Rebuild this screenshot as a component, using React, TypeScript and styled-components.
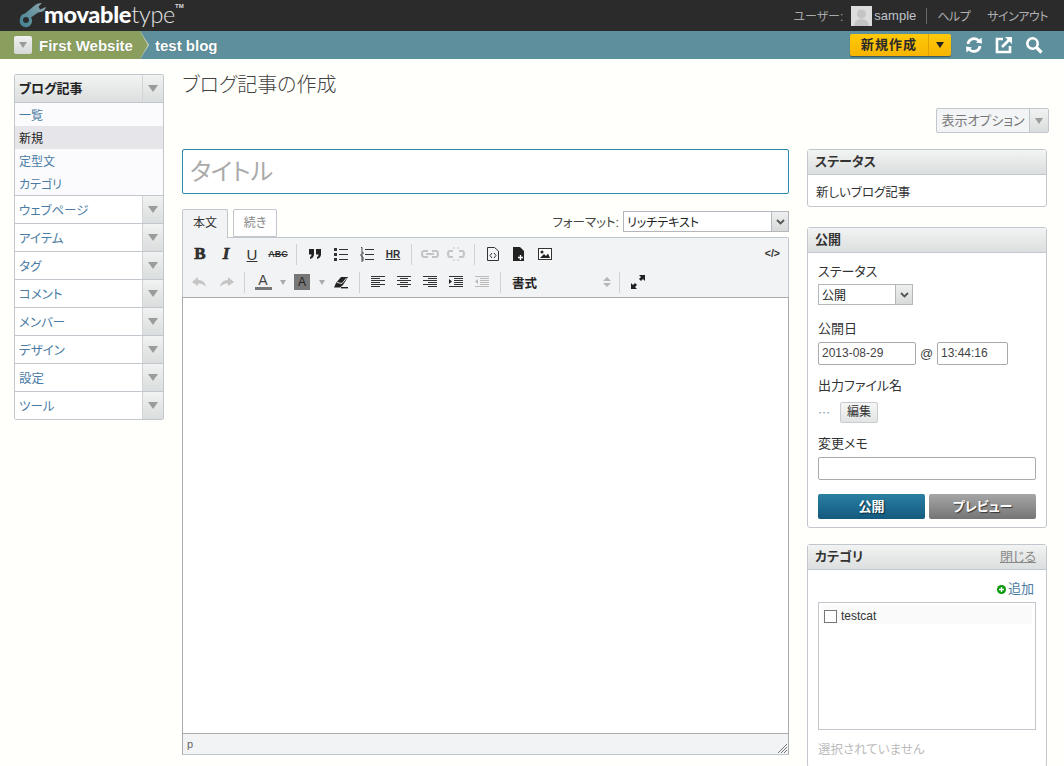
import React from "react";
import styled, { createGlobalStyle } from "styled-components";

const FONT = `"Liberation Sans", "Noto Sans CJK JP", sans-serif`;

const Global = createGlobalStyle`
  html, body { margin: 0; padding: 0; background: #fffffb; }
  body { font-family: ${FONT}; font-size: 13px; color: #333; font-feature-settings: "palt"; }
  * { box-sizing: border-box; }
`;

const Page = styled.div`width: 1064px; height: 766px; overflow: hidden; background: #fffffb;`;

/* header */
const TopBar = styled.header`
  height: 31px; background: #2b2b2b; display: flex; align-items: center; justify-content: space-between;
  padding: 0 16px 0 18px;
`;
const Logo = styled.div`display: flex; align-items: flex-start; height: 31px;`;
const LogoText = styled.div`
  font-family: Lato, "Open Sans", sans-serif; font-size: 23.5px; line-height: 29px; color: #fff; margin-left: -5px; letter-spacing: -0.3px;
  b { font-weight: 900; }
  span { font-weight: 300; color: #e4e4e4; }
`;
const Tm = styled.sup`font-size: 6px; line-height: 10px; font-weight: 700; color: #ddd; margin-top: 1px; margin-left: 0;`;
const UserNav = styled.nav`display: flex; align-items: center; font-size: 12px; color: #a9a9a9;`;
const Avatar = styled.div`width: 21px; height: 20px; background: #dcdcdc; margin: 0 2px 0 8px; display: flex; overflow: hidden;`;
const UserName = styled.span`color: #bfc4cc; font-size: 13px; padding-right: 10px; border-right: 1px solid #6a6a6a; line-height: 16px; margin-right: 10px;`;
const TopLink = styled.span`color: #b0b0b0; letter-spacing: -0.5px; margin-right: ${p => p.$gap ?? 0}px;`;

const NavBar = styled.div`height: 28px; background: #5d8f9c; display: flex; align-items: center; justify-content: space-between; padding-right: 21px;`;
const Crumbs = styled.div`display: flex; align-items: center; height: 100%;`;
const SiteCrumb = styled.div`
  position: relative; height: 28px; width: 140px; background: #8a9f5e; display: flex; align-items: center; padding-left: 14px; gap: 7px;
  &::after { content: ""; position: absolute; right: -8px; top: 0; width: 8px; height: 28px; background: #8a9f5e;
    clip-path: polygon(0 0, 100% 50%, 0 100%); }
  &::before { content: ""; position: absolute; right: -9px; top: 0; width: 9px; height: 28px; background: #dfe8e0;
    clip-path: polygon(0 0, 100% 50%, 0 100%); z-index: 0; }
`;
const CrumbMenu = styled.div`width: 18px; height: 18px; border-radius: 2px; background: linear-gradient(#f0f0f0, #d6d8d8); display: flex; align-items: center; justify-content: center;`;
const CrumbText = styled.b`color: #fff; font-size: 15px; font-weight: 700; text-shadow: 0 0 1px rgba(0,0,0,.3); margin-left: ${p => p.$left ?? 0}px; position: relative; z-index: 2;`;
const NavTools = styled.div`display: flex; align-items: center;`;
const CreateBtn = styled.div`
  width: 101px; height: 22px; display: flex; border-radius: 2px; background: linear-gradient(#ffca0a, #f7b400); box-shadow: 0 1px 1px rgba(0,0,0,.4);
  margin-right: 14px; font-weight: 700; font-size: 13px; color: #2a2a2a; align-items: center;
`;
const CreateLabel = styled.span`width: 79px; text-align: center; letter-spacing: 1.1px; line-height: 22px; border-right: 1px solid #e3a200; font-feature-settings: normal;`;
const CreateArrow = styled.span`flex: 1; display: flex; justify-content: center;`;
const ToolIcon = styled.svg`width: 18px; height: 18px; margin-left: ${p => p.$left ?? 12}px; display: block;`;

/* body */
const Body = styled.div`display: flex; align-items: flex-start; padding: 15px 0 0 14px;`;
const SideNav = styled.aside`width: 150px; margin-right: 18px; border: 1px solid #c2c7ce; border-radius: 2px; background: #fff;`;
const SideRow = styled.div`
  height: ${p => p.$first ? 27 : 28}px; display: flex; align-items: stretch; border-top: ${p => p.$first ? 0 : "1px solid #c2c7ce"};
  background: ${p => p.$active ? "linear-gradient(#f3f3f3,#dcdfdf)" : "#fff"};
`;
const SideLabel = styled.div`
  flex: 1; padding: 0 0 ${p => p.$active ? 2 : 1}px 4px; display: flex; align-items: center; font-size: ${p => p.$active ? 13 : 12.5}px;
  color: ${p => p.$active ? "#222" : "#4a7ba3"}; font-weight: ${p => p.$active ? 700 : 400};
`;
const SideToggle = styled.div`
  width: 21px; border-left: 1px solid #d0d4d8; background: linear-gradient(#f1f2f2, #dadddd); display: flex; align-items: center; justify-content: center;
`;
const Down = styled.span`
  width: 0; height: 0; display: block; border-left: ${p => p.$s ?? 5}px solid transparent; border-right: ${p => p.$s ?? 5}px solid transparent;
  border-top: ${p => (p.$s ?? 5) + 2}px solid ${p => p.$c ?? "#9b9b9b"};
`;
const SubList = styled.div`border-top: 1px solid #c2c7ce; background: #fbfbfd; padding: 0; height: 93px;`;
const SubItem = styled.div`
  height: 23px; padding-left: 4px; display: flex; align-items: center; font-size: 12px;
  color: ${p => p.$on ? "#222" : "#4a7ba3"}; background: ${p => p.$on ? "#e6e6ea" : "transparent"};
`;

const Content = styled.main`width: 867px;`;
const PageTitle = styled.h1`margin: 0; font-weight: 300; font-size: 20px; line-height: 23px; color: #444; height: 19px;`;
const OptionRow = styled.div`display: flex; justify-content: flex-end; margin-top: 15px;`;
const OptionBtn = styled.div`
  width: 113px; height: 25px; border: 1px solid #c2c7ce; border-radius: 2px; background: #f3f4f6; display: flex; font-size: 13px; color: #777;
`;
const OptionLabel = styled.span`flex: 1; text-align: center; line-height: 23px; border-right: 1px solid #c2c7ce;`;
const OptionArrow = styled.span`width: 18px; display: flex; align-items: center; justify-content: center; background: linear-gradient(#f1f2f2,#dadddd);`;

const Columns = styled.div`display: flex; align-items: flex-start; gap: 18px; margin-top: 16px;`;
const Editor = styled.section`width: 607px;`;
const TitleInput = styled.div`
  height: 45px; border: 1px solid #2b8aa8; border-radius: 2px; background: #fff; font-size: 24px; color: #aaa; line-height: 43px; padding-left: 7px;
`;
const TabBar = styled.div`display: flex; align-items: flex-end; height: 29px; margin-top: 14px; position: relative;`;
const Tab = styled.div`
  width: ${p => p.$w}px; height: ${p => p.$on ? 29 : 28}px; margin-right: 5px; border: 1px solid #c2c7ce; border-bottom: ${p => p.$on ? 0 : "1px solid #c2c7ce"};
  border-radius: 2px 2px 0 0; background: ${p => p.$on ? "#f2f3f4" : "#fff"}; color: ${p => p.$on ? "#333" : "#888"};
  font-size: 12px; text-align: center; line-height: 27px; margin-bottom: ${p => p.$on ? -1 : 0}px; z-index: 1;
`;
const FormatBox = styled.div`margin-left: auto; align-self: flex-start; margin-top: 3px; display: flex; align-items: center; font-size: 12.5px; color: #444;`;
const FakeSelect = styled.div`
  width: ${p => p.$w}px; height: ${p => p.$h ?? 21}px; margin-left: ${p => p.$left ?? 0}px; margin-top: ${p => p.$top ?? 0}px; border: 1px solid #b4b8bc; background: #fff; display: flex; align-items: center; font-size: 12px; color: #222; padding-left: 3px;
`;
const SelectValue = styled.span`flex: 1;`;
const SelectBtn = styled.span`
  width: 17px; height: 100%; background: linear-gradient(#eef0f0,#d8dada); border-left: 1px solid #b4b8bc; display: flex; align-items: center; justify-content: center;
`;
const Toolbar = styled.div`border: 1px solid #c2c7ce; border-bottom: 0; background: #f2f3f4; height: 60px; padding: 2px 0 0 4px; position: relative; border-radius: 0 2px 0 0;`;
const ToolRow = styled.div`display: flex; align-items: center; height: 28px;`;
const TBtn = styled.div`
  width: ${p => p.$w ?? 26}px; height: 26px; display: flex; align-items: center; justify-content: center; flex: none; color: #333;
  svg { display: block; }
`;
const TSep = styled.div`width: 1px; height: 21px; background: #cfd2d4; margin: 0 5px; flex: none;`;
const TxtIcon = styled.span`
  font-family: ${p => p.$serif ? `"Liberation Serif", serif` : `"Liberation Sans", sans-serif`}; font-weight: ${p => p.$thin ? 400 : 700}; color: #333;
  font-size: ${p => p.$size ?? 15}px; font-style: ${p => p.$it ? "italic" : "normal"}; text-decoration: ${p => p.$dec ?? "none"};
  -webkit-text-stroke: ${p => p.$heavy ? "0.6px #222" : "0"};
`;
const SourceBtn = styled.span`position: absolute; right: 8px; top: 9px; font-size: 10.5px; font-weight: 700; color: #333; font-family: "Liberation Sans", sans-serif;`;
const ColorA = styled.span`
  font-size: 14px; line-height: 13px; color: #444; display: flex; flex-direction: column; align-items: center; width: 17px;
  border-bottom: 3px solid #777;
`;
const BgA = styled.span`width: 16px; height: 16px; background: #777; color: #222; font-size: 12px; line-height: 16px; text-align: center;`;
const StyleSelect = styled.div`width: 108px; flex: none; display: flex; align-items: center; justify-content: space-between; padding: 0 3px 0 6px; font-size: 12.5px; font-weight: 700; color: #222;`;
const UpDown = styled.span`display: flex; flex-direction: column; gap: 2px;
  &::before, &::after { content: ""; width: 0; height: 0; border-left: 4px solid transparent; border-right: 4px solid transparent; }
  &::before { border-bottom: 4px solid #b5b5b5; }
  &::after { border-top: 4px solid #b5b5b5; }
`;
const EditArea = styled.div`height: 436px; background: #fff; border: 1px solid #a9acae; border-bottom: 0;`;
const StatusBar = styled.div`height: 22px; background: #f2f3f4; border: 1px solid #a9acae; border-top: 1px solid #a9acae; border-bottom-color: #c2c7ce; font-size: 11px; color: #666; padding: 4px 4px; position: relative;`;
const Grip = styled.svg`position: absolute; right: 0; bottom: 0; width: 11px; height: 11px;`;

const Side = styled.section`width: 240px; display: flex; flex-direction: column;`;
const Panel = styled.div`
  border: 1px solid #c2c7ce; border-radius: 3px; background: #fff; margin-bottom: ${p => p.$mb ?? 0}px;
`;
const PanelHead = styled.div`
  height: 25px; background: linear-gradient(#f2f3f3,#dcdfdf); border-bottom: 1px solid #c2c7ce; display: flex; align-items: center; justify-content: space-between;
  padding: 0 10px 4px 7px; font-size: 13px; font-weight: 700; color: #333;
`;
const CloseLink = styled.span`font-weight: 400; color: #888; text-decoration: underline; font-size: 13px;`;
const PanelBody = styled.div`padding: ${p => p.$pad ?? "9px 10px 11px"}; font-size: 12px; color: #333;`;
const FieldLabel = styled.div`font-size: 13px; line-height: 18px; color: #333; margin-top: ${p => p.$top ?? 0}px;`;
const StatusText = styled.div`font-size: 12.5px; line-height: 20px; color: #333;`;
const DateRow = styled.div`display: flex; align-items: center; margin-top: 4px;`;
const TextBox = styled.div`
  width: ${p => p.$w}px; height: 23px; border: 1px solid #aaa; border-radius: 2px; background: #fff; font-size: 12px; line-height: 21px; padding-left: 3px; color: #444;
`;
const At = styled.span`width: 21px; text-align: center; font-size: 13px; color: #444;`;
const BasenameRow = styled.div`display: flex; align-items: center; margin-top: 7px; color: #7a9ab0; font-size: 12px;`;
const Dots = styled.span`font-family: "Noto Sans CJK JP", sans-serif; font-feature-settings: normal; width: 12px;`;
const MiniBtn = styled.div`
  width: 38px; height: 21px; margin-left: 10px; border: 1px solid #c8ccd0; border-radius: 2px; background: linear-gradient(#f6f6f6,#e2e4e4); font-size: 12px; color: #333; text-align: center; line-height: 19px;
`;
const WideInput = styled.div`height: 23px; border: 1px solid #aaa; border-radius: 2px; margin-top: 4px; background: #fff;`;
const Actions = styled.div`display: flex; gap: 4px; margin-top: 14px;`;
const Action = styled.div`
  flex: 1; height: 25px; border-radius: 2px; color: #fff; font-weight: 700; font-size: 13px; text-align: center; line-height: 25px; text-shadow: 1px 1px 1px rgba(0,0,0,.6);
  background: ${p => p.$primary ? "linear-gradient(#2a7fa3,#135a7e)" : "linear-gradient(#a6a6a6,#757575)"};
`;
const AddRow = styled.div`display: flex; justify-content: flex-end; align-items: center; gap: 1px; padding-right: 2px; font-size: 13px; color: #4a7ba3; line-height: 18px;`;
const CatBox = styled.div`height: 128px; margin-top: 4px; border: 1px solid #c2c7ce; background: #fff; padding: 2px 3px;`;
const CatItem = styled.div`height: 19px; background: #fafafa; display: flex; align-items: center; gap: 4px; padding: 3px 0 0 2px; font-size: 12px; color: #333;`;
const Check = styled.span`width: 13px; height: 13px; border: 1px solid #777; background: #fff; display: block;`;
const NoneText = styled.div`font-size: 12.5px; color: #bbb; margin-top: 11px; line-height: 18px;`;

const Wrench = () => (
  <svg width="30" height="26" viewBox="0 0 30 26" style={{ marginTop: 2, marginLeft: 1, display: "block" }}>
    <defs>
      <linearGradient id="wr" x1="0" y1="1" x2="1" y2="0">
        <stop offset="0" stopColor="#3f8090" />
        <stop offset="1" stopColor="#8fa9b0" />
      </linearGradient>
    </defs>
    <path d="M1 17 A6 6 0 0 1 6 11.5 L15 4 Q18 1 23 1 L19.5 4.5 L21 7.5 L27 5 Q26 10 19 10.5 L12 15.5 A6.2 6.2 0 1 1 1 17 Z M4 18 A3 3 0 1 0 10 18 A3 3 0 1 0 4 18 Z" fill="url(#wr)" fillRule="evenodd" />
  </svg>
);
const Person = () => (
  <svg width="21" height="20" viewBox="0 0 21 20"><circle cx="10.5" cy="8" r="4.5" fill="#c4c4c4" /><path d="M3 20 Q4 13 10.5 13 Q17 13 18 20Z" fill="#c4c4c4" /></svg>
);
const I = ({ children, w = 16, h = 16 }: { children: React.ReactNode; w?: number; h?: number }) => (
  <svg width={w} height={h} viewBox={`0 0 ${w} ${h}`}>{children}</svg>
);
const Lines = ({ c = "#333", rows }: { c?: string; rows: [number, number][] }) => (
  <I>{rows.map(([x, x2], i) => <rect key={i} x={x} y={2 + i * 2} width={x2 - x} height="1" fill={c} />)}</I>
);
const SelChev = () => (
  <svg width="9" height="6" viewBox="0 0 9 6"><path d="M1 1 L4.5 4.5 L8 1" stroke="#555" strokeWidth="1.8" fill="none" /></svg>
);

export default function App() {
  const menu = ["ウェブページ", "アイテム", "タグ", "コメント", "メンバー", "デザイン", "設定", "ツール"];
  return (
    <Page>
      <Global />
      <TopBar>
        <Logo>
          <Wrench />
          <LogoText><b>movable</b><span>type</span></LogoText>
          <Tm>TM</Tm>
        </Logo>
        <UserNav>
          <span>ユーザー:</span>
          <Avatar><Person /></Avatar>
          <UserName>sample</UserName>
          <TopLink $gap={17}>ヘルプ</TopLink>
          <TopLink>サインアウト</TopLink>
        </UserNav>
      </TopBar>
      <NavBar>
        <Crumbs>
          <SiteCrumb>
            <CrumbMenu><Down $s={4} /></CrumbMenu>
            <CrumbText>First Website</CrumbText>
          </SiteCrumb>
          <CrumbText $left={15}>test blog</CrumbText>
        </Crumbs>
        <NavTools>
          <CreateBtn>
            <CreateLabel>新規作成</CreateLabel>
            <CreateArrow><Down $s={4} $c="#222" /></CreateArrow>
          </CreateBtn>
          <ToolIcon viewBox="0 0 18 18" $left={0}>
            <path d="M3 8 A6.2 6.2 0 0 1 14 5" stroke="#fff" strokeWidth="2.8" fill="none" />
            <path d="M11 6.5 L17 7.5 L16.5 1.5 Z" fill="#fff" />
            <path d="M15 10 A6.2 6.2 0 0 1 4 13" stroke="#fff" strokeWidth="2.8" fill="none" />
            <path d="M7 11.5 L1 10.5 L1.5 16.5 Z" fill="#fff" />
          </ToolIcon>
          <ToolIcon viewBox="0 0 18 18">
            <path d="M8 3 H2 V16 H15 V10" stroke="#fff" strokeWidth="2.6" fill="none" />
            <path d="M7 11 L14 4" stroke="#fff" strokeWidth="2.6" />
            <path d="M10 1 H17 V8 Z" fill="#fff" />
          </ToolIcon>
          <ToolIcon viewBox="0 0 18 18">
            <circle cx="7.5" cy="7.5" r="5.2" stroke="#fff" strokeWidth="2.6" fill="none" />
            <path d="M11.5 11.5 L16.5 16.5" stroke="#fff" strokeWidth="3.2" />
          </ToolIcon>
        </NavTools>
      </NavBar>
      <Body>
        <SideNav>
          <SideRow $first $active>
            <SideLabel $active>ブログ記事</SideLabel>
            <SideToggle><Down /></SideToggle>
          </SideRow>
          <SubList>
            <SubItem>一覧</SubItem>
            <SubItem $on>新規</SubItem>
            <SubItem>定型文</SubItem>
            <SubItem>カテゴリ</SubItem>
          </SubList>
          {menu.map(m => (
            <SideRow key={m}>
              <SideLabel>{m}</SideLabel>
              <SideToggle><Down /></SideToggle>
            </SideRow>
          ))}
        </SideNav>
        <Content>
          <PageTitle>ブログ記事の作成</PageTitle>
          <OptionRow>
            <OptionBtn><OptionLabel>表示オプション</OptionLabel><OptionArrow><Down $s={4} /></OptionArrow></OptionBtn>
          </OptionRow>
          <Columns>
            <Editor>
              <TitleInput>タイトル</TitleInput>
              <TabBar>
                <Tab $w={46} $on>本文</Tab>
                <Tab $w={44}>続き</Tab>
                <FormatBox>
                  フォーマット:
                  <FakeSelect $w={166} $left={4}>
                    <SelectValue>リッチテキスト</SelectValue>
                    <SelectBtn><SelChev /></SelectBtn>
                  </FakeSelect>
                </FormatBox>
              </TabBar>
              <Toolbar>
                <ToolRow>
                  <TBtn><TxtIcon $serif $heavy $size={17}>B</TxtIcon></TBtn>
                  <TBtn><TxtIcon $serif $it $heavy $size={17}>I</TxtIcon></TBtn>
                  <TBtn><TxtIcon $thin $size={15} $dec="underline">U</TxtIcon></TBtn>
                  <TBtn><TxtIcon $size={9} $dec="line-through">ABC</TxtIcon></TBtn>
                  <TSep />
                  <TBtn><I w={14} h={12}><path d="M1 1 H6 V6 Q6 10 2 11 L2 9 Q3.5 8.5 3.5 6.5 H1Z M8 1 H13 V6 Q13 10 9 11 L9 9 Q10.5 8.5 10.5 6.5 H8Z" fill="#222" /></I></TBtn>
                  <TBtn><I><rect x="1" y="2" width="3" height="3" fill="#333" /><rect x="1" y="7" width="3" height="3" fill="#333" /><rect x="1" y="12" width="3" height="3" fill="#333" /><rect x="6" y="3" width="9" height="1" fill="#333" /><rect x="6" y="8" width="9" height="1" fill="#333" /><rect x="6" y="13" width="9" height="1" fill="#333" /></I></TBtn>
                  <TBtn><I><path d="M2 1.5 H3 V5 M2 6 H4 V8 H2 V10 H4 M2 11 H4 V15 H2 M2 13 H4" stroke="#333" strokeWidth=".9" fill="none" /><rect x="6" y="3" width="9" height="1" fill="#333" /><rect x="6" y="8" width="9" height="1" fill="#333" /><rect x="6" y="13" width="9" height="1" fill="#333" /></I></TBtn>
                  <TBtn><TxtIcon $size={10} $dec="underline">HR</TxtIcon></TBtn>
                  <TSep />
                  <TBtn><I w={18} h={12}><path d="M7 3 H3 Q1 3 1 6 Q1 9 3 9 H7 M11 3 H15 Q17 3 17 6 Q17 9 15 9 H11 M5 6 H13" stroke="#c4c4c4" strokeWidth="2" fill="none" /></I></TBtn>
                  <TBtn><I w={18} h={16}><path d="M6 5 H3 Q1 5 1 8 Q1 11 3 11 H6 M12 5 H15 Q17 5 17 8 Q17 11 15 11 H12" stroke="#c4c4c4" strokeWidth="2" fill="none" /><path d="M7 1 V3 M11 1 V3 M7 13 V15 M11 13 V15" stroke="#c4c4c4" strokeWidth="1" /></I></TBtn>
                  <TSep />
                  <TBtn><I><path d="M2.5 1.5 H9.5 L13.5 5 V14.5 H2.5 Z" stroke="#333" fill="none" /><path d="M7 7 L5 9.5 L7 12 M9 7 L11 9.5 L9 12" stroke="#333" fill="none" /></I></TBtn>
                  <TBtn><I><path d="M2 1 H9 L13 5 V15 H2 Z" fill="#222" /><path d="M9.5 9 V14 M7 11.5 H12" stroke="#fff" strokeWidth="1.4" /></I></TBtn>
                  <TBtn><I><rect x="1.5" y="2.5" width="13" height="11" fill="#fff" stroke="#333" /><circle cx="5" cy="6" r="1.5" fill="#222" /><path d="M3 12 L7 8 L9 10 L11 7.5 L13 12Z" fill="#222" /></I></TBtn>
                </ToolRow>
                <SourceBtn>&lt;/&gt;</SourceBtn>
                <ToolRow>
                  <TBtn><I w={18} h={14}><path d="M7 2 L1 7 L7 11 V8.5 Q12 8 15 12 Q14 5 7 5Z" fill="#c4c4c4" /></I></TBtn>
                  <TBtn><I w={18} h={14}><path d="M11 2 L17 7 L11 11 V8.5 Q6 8 3 12 Q4 5 11 5Z" fill="#c4c4c4" /></I></TBtn>
                  <TSep />
                  <TBtn><ColorA>A</ColorA></TBtn>
                  <TBtn $w={13}><Down $s={3} $c="#aaa" /></TBtn>
                  <TBtn><BgA>A</BgA></TBtn>
                  <TBtn $w={13}><Down $s={3} $c="#aaa" /></TBtn>
                  <TBtn><I><path d="M1 13.5 L3 9 L8 3 H15 L10 11 L7 13.5 Z" fill="#222" /><path d="M4 8.5 L9 9.5 L13.5 4" stroke="#f2f3f4" strokeWidth=".9" fill="none" /><rect x="8" y="13" width="7" height="1.4" fill="#222" /></I></TBtn>
                  <TSep />
                  <TBtn><Lines rows={[[1, 15], [1, 10], [1, 15], [1, 10], [1, 15], [1, 10]]} /></TBtn>
                  <TBtn><Lines rows={[[1, 15], [4, 12], [1, 15], [4, 12], [1, 15], [4, 12]]} /></TBtn>
                  <TBtn><Lines rows={[[1, 15], [6, 15], [1, 15], [6, 15], [1, 15], [6, 15]]} /></TBtn>
                  <TBtn><I><rect x="1" y="2" width="14" height="1" fill="#333" /><rect x="6" y="4" width="9" height="1" fill="#333" /><rect x="6" y="6" width="9" height="1" fill="#333" /><rect x="6" y="8" width="9" height="1" fill="#333" /><rect x="6" y="10" width="9" height="1" fill="#333" /><rect x="1" y="12" width="14" height="1" fill="#333" /><path d="M1 5 L4 7.5 L1 10Z" fill="#222" /></I></TBtn>
                  <TBtn><I><rect x="1" y="2" width="14" height="1" fill="#bbb" /><rect x="6" y="4" width="9" height="1" fill="#bbb" /><rect x="6" y="6" width="9" height="1" fill="#bbb" /><rect x="6" y="8" width="9" height="1" fill="#bbb" /><rect x="6" y="10" width="9" height="1" fill="#bbb" /><rect x="1" y="12" width="14" height="1" fill="#bbb" /><path d="M4 5 L1 7.5 L4 10Z" fill="#bbb" /></I></TBtn>
                  <TSep />
                  <StyleSelect>書式<UpDown /></StyleSelect>
                  <TSep />
                  <TBtn><I><path d="M9 1 H15 V7 L13 5 L11 7 L9 5 L11 3Z M1 9 L3 11 L5 9 L7 11 L5 13 L7 15 H1Z" fill="#222" /></I></TBtn>
                </ToolRow>
              </Toolbar>
              <EditArea />
              <StatusBar>
                p
                <Grip viewBox="0 0 11 11"><path d="M1 10 L10 1 M4 10 L10 4 M7 10 L10 7" stroke="#777" strokeWidth="1" /></Grip>
              </StatusBar>
            </Editor>
            <Side>
              <Panel $mb={20}>
                <PanelHead>ステータス</PanelHead>
                <PanelBody $pad="8px 8px 3px">
                  <StatusText>新しいブログ記事</StatusText>
                </PanelBody>
              </Panel>
              <Panel $mb={16}>
                <PanelHead>公開</PanelHead>
                <PanelBody $pad="10px 10px 8px">
                  <FieldLabel>ステータス</FieldLabel>
                  <FakeSelect $w={95} $h={21} $top={3}>
                    <SelectValue>公開</SelectValue>
                    <SelectBtn><SelChev /></SelectBtn>
                  </FakeSelect>
                  <FieldLabel $top={15}>公開日</FieldLabel>
                  <DateRow>
                    <TextBox $w={98}>2013-08-29</TextBox>
                    <At>@</At>
                    <TextBox $w={71}>13:44:16</TextBox>
                  </DateRow>
                  <FieldLabel $top={12}>出力ファイル名</FieldLabel>
                  <BasenameRow><Dots>…</Dots><MiniBtn>編集</MiniBtn></BasenameRow>
                  <FieldLabel $top={12}>変更メモ</FieldLabel>
                  <WideInput />
                  <Actions>
                    <Action $primary>公開</Action>
                    <Action>プレビュー</Action>
                  </Actions>
                </PanelBody>
              </Panel>
              <Panel>
                <PanelHead>カテゴリ<CloseLink>閉じる</CloseLink></PanelHead>
                <PanelBody $pad="10px 10px 8px">
                  <AddRow>
                    <I w={11} h={11}><circle cx="5.5" cy="5.5" r="4.5" fill="#0a9a0a" /><path d="M5.5 3 V8 M3 5.5 H8" stroke="#fff" strokeWidth="1.4" /></I>
                    追加
                  </AddRow>
                  <CatBox>
                    <CatItem><Check />testcat</CatItem>
                  </CatBox>
                  <NoneText>選択されていません</NoneText>
                </PanelBody>
              </Panel>
            </Side>
          </Columns>
        </Content>
      </Body>
    </Page>
  );
}
